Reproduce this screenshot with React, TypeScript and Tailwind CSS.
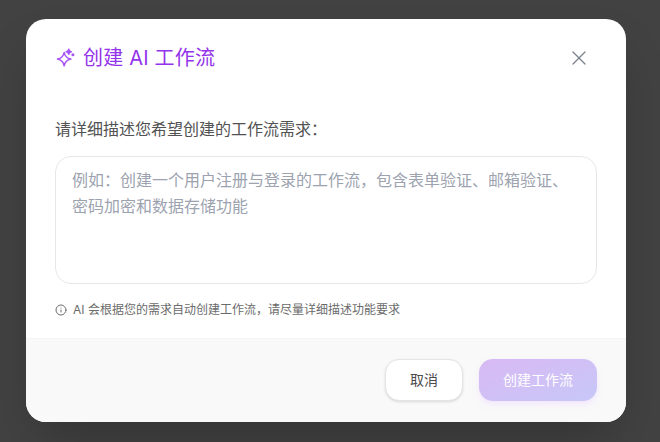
import { Info, X } from 'lucide-react';

const font = { fontFamily: '"Inter", "Noto Sans CJK SC", sans-serif' };

export default function App() {
  return (
    <div className="w-[660px] h-[442px] bg-[#424242] pt-[19px] pl-[26px] overflow-hidden" style={font}>
      <div className="w-[600px] h-[403px] bg-white rounded-[20px] overflow-hidden flex flex-col shadow-2xl">
        <div className="h-[319px] px-[29px] flex flex-col">
          <div className="flex items-center justify-between h-[78px] pr-[6px]">
            <div className="flex items-center gap-[8px] text-[#9333ea]">
              <svg width="20" height="20" viewBox="0 0 24 24" fill="none" stroke="#a855f7" strokeWidth="1.9" strokeLinejoin="round" strokeLinecap="round">
                <path d="M11 5.5c1 4.6 3.2 6.8 8 7.8-4.8 1-7 3.2-8 8-1-4.8-3.2-7-8-8 4.800-1 7-3.200 8-7.800Z" />
                <path d="M16.500 1.500l.8 2.200 2.200.8-2.200.8-.8 2.200-.8-2.200-2.200-.8 2.200-.8Z" fill="#a855f7" />
                <circle cx="21.500" cy="8" r="0.900" fill="#a855f7" />
              </svg>
              <h2 className="text-[20px] leading-7 font-normal tracking-[0.2px]">创建 AI 工作流</h2>
            </div>
            <X size={24} strokeWidth={1.25} className="text-[#7a7f89]" />
          </div>
          <label className="mt-[21px] text-[16px] leading-[22px] text-[#525252]">请详细描述您希望创建的工作流需求：</label>
          <div className="mt-[16px] h-[128px] rounded-2xl border border-[#e5e7eb] px-4 py-[10px] text-[16px] leading-[26px] text-[#9ca3af]">
            例如：创建一个用户注册与登录的工作流，包含表单验证、邮箱验证、密码加密和数据存储功能
          </div>
          <div className="mt-[18px] flex items-center gap-[6px] text-[12px] leading-4 text-[#6b6b6b]">
            <Info size={12} />
            <span>AI 会根据您的需求自动创建工作流，请尽量详细描述功能要求</span>
          </div>
        </div>
        <div className="flex-1 bg-[#f9f9f9] border-t border-[#f5f5f5] flex items-start justify-end gap-4 pt-[20px] pr-[29px]">
          <button className="w-[78px] h-[42px] pb-[2px] rounded-[14px] bg-white border border-[#e5e5e5] text-[14px] text-[#4b4b4b] shadow-sm">取消</button>
          <button className="w-[118px] h-[42px] pb-[2px] rounded-[14px] bg-gradient-to-br from-[#d8b9f3] to-[#c7c7f8] text-[14px] text-white shadow-md shadow-purple-100">创建工作流</button>
        </div>
      </div>
    </div>
  );
}
